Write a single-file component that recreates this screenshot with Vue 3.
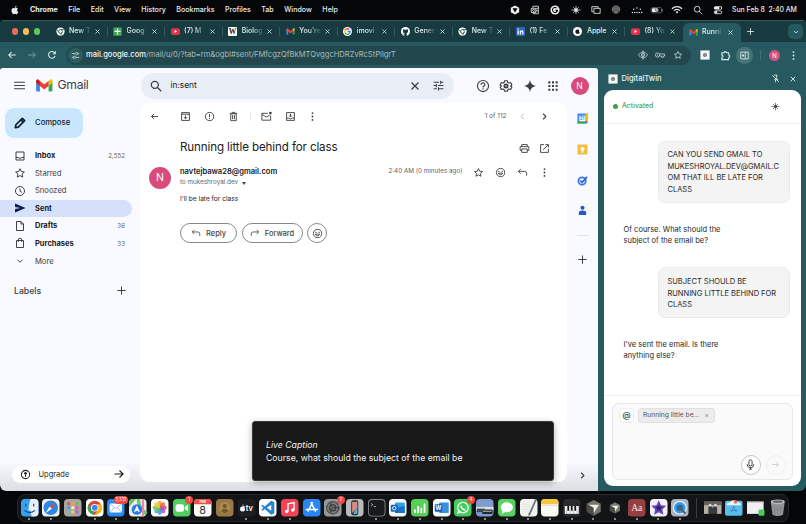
<template>
  <div class="desktop">
    <!-- macOS menu bar -->
    <div class="menubar">
      <Icon class="apple" name="apple" :size="10" />
      <span v-for="item in menus" :key="item" class="menu-item">{{ item }}</span>
      <div class="status">
        <span v-for="name in statusIcons" :key="name" class="status-cell">
          <Icon :name="name" :size="10" />
        </span>
      </div>
      <span class="clock">Sun Feb 8&nbsp; 2:40 AM</span>
    </div>

    <div class="window">
      <!-- Browser tabs -->
      <div class="tabs">
        <div class="lights">
          <i class="red"></i><i class="yellow"></i><i class="green"></i>
        </div>
        <div v-for="(tab, index) in tabs" :key="index" class="tab" :class="{ active: index === tabs.length - 1 }">
          <Icon :name="tab.icon" :size="9" />
          <span class="tab-title" :class="{ whole: tab.whole }">{{ tab.title }}</span>
          <Icon class="tab-close" name="close" :size="7" />
        </div>
        <Icon class="new-tab" name="plus" :size="9" />
        <span class="tab-search"><Icon name="down" :size="8" /></span>
      </div>

      <!-- Address bar -->
      <div class="toolbar">
        <Icon class="nav-button" name="back" :size="10" />
        <Icon class="nav-button dim" name="forward" :size="10" />
        <Icon class="nav-button" name="reload" :size="10" />
        <div class="omnibox">
          <span class="site-chip"><Icon name="site" :size="9" /></span>
          <span class="url"><b>mail.google.com</b>/mail/u/0/?tab=rm&amp;ogbl#sent/FMfcgzQfBkMTQvggcHDRZvRcStPllgrT</span>
          <Icon name="eye" :size="10" />
          <Icon name="key" :size="10" />
          <Icon name="star" :size="10" />
        </div>
        <div class="extensions">
          <Icon name="twin" :size="10" />
          <Icon name="puzzle" :size="11" />
          <span class="panel-button"><Icon name="sidepanel" :size="9" /></span>
          <i class="toolbar-line"></i>
          <span class="profile">N</span>
          <Icon name="dots" :size="11" />
        </div>
      </div>

      <div class="content">
        <div class="gmail">
          <!-- Folder list -->
          <div class="sidebar">
            <div class="brand">
              <Icon name="menu" :size="13" />
              <svg class="logo" viewBox="0 0 17 13">
                <path fill="#4285f4" d="M0 2.200h4V13H1.200Q0 13 0 11.800z" />
                <path fill="#34a853" d="M13 2.200h4v9.600Q17 13 15.800 13H13z" />
                <path fill="#fbbc04" d="M13 2l1-1Q15.400-.3 16.500.8T17 3.800L13 7.200z" />
                <path fill="#c5221f" d="M4 2L3 1Q1.600-.3.500.8T0 3.800L4 7.200z" />
                <path fill="#ea4335" d="M4 2l4.500 3.500L13 2v5.200l-4.500 3.600L4 7.200z" />
              </svg>
              <span>Gmail</span>
            </div>
            <div class="compose"><Icon name="pencil" :size="14" /><span>Compose</span></div>
            <div class="folders">
              <div v-for="folder in folders" :key="folder.name" class="folder"
                :class="{ bold: folder.bold, selected: folder.selected }">
                <Icon :name="folder.icon" :size="folder.icon === 'down' ? 10 : 12" />
                <span class="folder-name">{{ folder.name }}</span>
                <span class="count">{{ folder.count }}</span>
              </div>
            </div>
            <div class="labels"><span>Labels</span><Icon name="plus" :size="11" /></div>
            <div class="upgrade">
              <Icon name="upgrade" :size="11" />
              <span>Upgrade</span>
              <Icon name="forward" :size="12" />
            </div>
          </div>

          <div class="main">
            <div class="topbar">
              <div class="search">
                <Icon name="search" :size="14" />
                <span>in:sent</span>
                <Icon name="close" :size="12" />
                <Icon name="tune" :size="13" />
              </div>
              <div class="top-icons">
                <Icon name="help" :size="14" />
                <Icon name="gear" :size="14" />
                <Icon name="spark" :size="14" />
                <Icon name="grid" :size="14" />
                <span class="avatar small">N</span>
              </div>
            </div>

            <div class="below">
              <div class="mail">
                <div class="mail-tools">
                  <Icon class="tool-back" name="back" :size="9" />
                  <Icon class="tool-archive" name="archive" :size="11" />
                  <Icon name="spam" :size="11" />
                  <Icon name="trash" :size="11" />
                  <i class="tool-line"></i>
                  <Icon name="unread" :size="11" />
                  <Icon name="moveto" :size="11" />
                  <Icon name="dots" :size="11" />
                  <span class="position">1 of 112</span>
                  <Icon class="faded" name="left" :size="11" />
                  <Icon name="right" :size="11" />
                </div>
                <div class="subject">
                  <h2>Running little behind for class</h2>
                  <Icon name="print" :size="11" />
                  <Icon name="open" :size="11" />
                </div>
                <div class="message">
                  <span class="avatar">N</span>
                  <div class="message-body">
                    <div class="sender">
                      <b>navtejbawa28@gmail.com</b>
                      <span class="time">2:40 AM (0 minutes ago)</span>
                      <Icon name="star" :size="11" />
                      <Icon name="smile" :size="11" />
                      <Icon name="reply" :size="11" />
                      <Icon name="dots" :size="11" />
                    </div>
                    <div class="recipient">to mukeshroyal.dev <i class="caret"></i></div>
                    <p>I'll be late for class</p>
                    <div class="actions">
                      <button class="reply"><Icon name="reply" :size="10" />Reply</button>
                      <button class="fwd"><Icon name="share" :size="10" />Forward</button>
                      <button class="emoji"><Icon name="smile" :size="11" /></button>
                    </div>
                  </div>
                </div>
              </div>
              <!-- Google apps rail -->
              <div class="rail">
                <Icon name="calendar" :size="11" />
                <Icon name="keep" :size="11" />
                <Icon name="tasks" :size="11" />
                <Icon name="contact" :size="11" />
                <i class="rail-line"></i>
                <Icon name="plus" :size="11" />
                <Icon class="rail-toggle" name="right" :size="11" />
              </div>
            </div>
          </div>
        </div>

        <!-- Extension side panel -->
        <div class="panel">
          <div class="panel-title">
            <Icon name="twin" :size="10" />
            <span>DigitalTwin</span>
            <Icon name="pin" :size="9" />
            <Icon name="close" :size="8" />
          </div>
          <div class="chat">
            <div class="chat-status">
              <i></i><span>Activated</span>
              <Icon name="voice" :size="9" />
            </div>
            <div class="messages">
              <div class="bubble">CAN YOU SEND GMAIL TO<br>MUKESHROYAL.DEV@GMAIL.C<br>OM THAT ILL BE LATE FOR<br>CLASS</div>
              <div class="answer">Of course. What should the<br>subject of the email be?</div>
              <div class="bubble">SUBJECT SHOULD BE<br>RUNNING LITTLE BEHIND FOR<br>CLASS</div>
              <div class="answer">I've sent the email. Is there<br>anything else?</div>
            </div>
            <div class="composer">
              <div class="input-box">
                <div class="context">
                  <span class="at">@</span>
                  <span class="chip">Running little be... <em>×</em></span>
                </div>
                <div class="controls">
                  <span class="mic"><Icon name="mic" :size="11" /></span>
                  <span class="send"><Icon name="forward" :size="9" /></span>
                </div>
              </div>
            </div>
          </div>
        </div>
      </div>
    </div>

    <div class="caption">
      <em>Live Caption</em>
      <span>Course, what should the subject of the email be</span>
    </div>

    <!-- Dock -->
    <div class="dock-area">
      <div class="dock">
        <div v-for="(app, index) in dock" :key="index" class="app" :class="{ running: app.running }">
          <svg viewBox="0 0 20 20" v-html="app.art"></svg>
          <span v-if="app.badge" class="badge">{{ app.badge }}</span>
        </div>
        <i class="dock-line"></i>
        <div v-for="(art, index) in stacks" :key="'s' + index" class="app">
          <svg viewBox="0 0 20 20" v-html="art"></svg>
        </div>
      </div>
    </div>
  </div>
</template>

<script setup>
import { h } from 'vue';

// Helpers for the icon markup
const line = (d, width = 2) =>
  `<path d="${d}" fill="none" stroke="currentColor" stroke-width="${width}" stroke-linejoin="round"/>`;
const fill = (d, color = 'currentColor') => `<path d="${d}" fill="${color}"/>`;
const ring = 'M12 3a9 9 0 1 0 0 18 9 9 0 0 0 0-18z';
const chrome = (r) => `<circle cx="12" cy="12" r="${r}" fill="#f2f6f6"/><circle cx="12" cy="12" r="5" fill="#fff" stroke="#24474a" stroke-width="2"/>` +
  line('M12 7h9M7.700 14.500L3.500 7.500M16.300 14.500L12 22', 2).replace('currentColor', '#24474a');
const youtube = '<rect x="0" y="3" width="24" height="18" rx="5" fill="#e8304a"/>' + fill('M9.500 8l7 4-7 4z', '#fff');
const gmail = fill('M1 5h5v15H1z', '#4285f4') + fill('M18 5h5v15h-5z', '#34a853') + fill('M18 5l2-2h3v5l-5 4z', '#fbbc04') +
  fill('M1 4l3-1 8 7 6-5v7l-6 5-6-5-5-4z', '#ea4335');

const icons = {
  apple: fill('M17 12.600c0-2.500 2-3.700 2.100-3.800-1.200-1.700-3-1.900-3.600-1.900-1.500-.2-3 .9-3.700.9-.8 0-2-.9-3.200-.9C6.900 7 5.300 8 4.400 9.500c-1.800 3-.5 7.500 1.200 10 .9 1.200 1.900 2.600 3.200 2.500 1.300 0 1.800-.8 3.300-.8s2 .8 3.300.8c1.400 0 2.300-1.200 3.100-2.400 1-1.400 1.400-2.700 1.400-2.800 0 0-2.900-1-2.900-4.200zM14.600 5.300C15.300 4.500 15.700 3.300 15.600 2c-1 .1-2.300.7-3 1.500-.6.7-1.200 1.900-1 3 1.100.1 2.300-.5 3-1.200z'),
  cube: fill('M12 1l10 5.500v11L12 23 2 17.500v-11z') + fill('M6 8h12l-6 10z', '#000'),
  outlook: line('M7 7V3h13v18H8v-3M3 8h11v10H3z') + '<circle cx="8.500" cy="13" r="2.500" fill="none" stroke="currentColor" stroke-width="2"/>' + line('M14 10l6-3M14 14h6'),
  grammarly: '<circle cx="12" cy="12" r="11" fill="currentColor"/>' + line('M16 7.500a6 6 0 1 0 2 5h-5M16 12v5', 2.5).replace('currentColor', '#000'),
  voice: '<circle cx="12" cy="12" r="4" fill="currentColor"/>' + line('M1 12h22M12 2v20M5.500 5.500l13 13M18.500 5.500l-13 13', 1.8),
  windows: line('M6 16H2V4h15v4M7 8h15v12H7z'),
  airdrop: '<circle cx="12" cy="11" r="10" fill="#777"/>' + line('M6 19V11a6 6 0 0 1 12 0v8M9.500 19v-7a2.500 2.500 0 0 1 5 0v7', 1.5).replace('currentColor', '#333'),
  light: '<g fill="currentColor"><circle cx="1" cy="18" r="1.700"/><circle cx="6.500" cy="18" r="1.700"/><circle cx="12" cy="18" r="1.700"/><circle cx="17.500" cy="18" r="1.700"/><circle cx="23" cy="18" r="1.700"/><circle cx="4" cy="10" r="1.700"/><circle cx="12" cy="7" r="1.700"/><circle cx="20" cy="10" r="1.700"/></g>',
  battery: '<rect x="-2" y="6" width="25" height="13" rx="4" fill="none" stroke="#888" stroke-width="1.500"/><rect x="0" y="8" width="15" height="9" rx="2" fill="currentColor"/>' + '<path d="M12 4L7 13h4l-1 7 6-9h-4z" fill="#fff" stroke="#000" stroke-width="1"/>' + fill('M24 10h2v5h-2z', '#888'),
  wifi: line('M0 9a17 17 0 0 1 24 0M4.500 13.500a10.500 10.500 0 0 1 15 0', 3) + fill('M8.500 16.500a5 5 0 0 1 7 0L12 20.500z'),
  find: line('M10 3a7 7 0 1 0 0 14 7 7 0 0 0 0-14zM15 15l7 7'),
  control: '<rect x="2" y="3" width="20" height="8" rx="4" fill="currentColor"/><rect x="3" y="14" width="18" height="7" rx="3.500" fill="none" stroke="currentColor" stroke-width="2"/><circle cx="17" cy="7" r="2.500" fill="#000"/><circle cx="7" cy="17.500" r="3" fill="currentColor"/>',
  chrome: chrome(11),
  sheets: '<rect x="1" y="1" width="22" height="22" rx="2" fill="#43a853"/>' + fill('M10.500 4h3v6H20v3h-6.500v7h-3v-7H4v-3h6.500z', '#fff'),
  youtube,
  wiki: '<rect width="24" height="24" rx="3" fill="#fff"/><text x="12" y="19" text-anchor="middle" font-family="Liberation Serif, serif" font-size="20" font-weight="bold" fill="#222">W</text>',
  gmail,
  google: '<circle cx="12" cy="12" r="12" fill="#fff"/><g fill="none" stroke-width="3.500"><path stroke="#ea4335" d="M5.500 8.500A7.500 7.500 0 0 1 17 6.500"/><path stroke="#fbbc04" d="M5.500 8.500a7.500 7.500 0 0 0 0 7"/><path stroke="#34a853" d="M5.500 15.500a7.500 7.500 0 0 0 11 2.500"/><path stroke="#4285f4" d="M16.500 18a7.500 7.500 0 0 0 3-6H12"/></g>',
  github: '<circle cx="12" cy="12" r="12" fill="#fff"/>' + fill('M9 24v-4c-4 .5-4-2-5.500-2.500C6 16.500 6.500 19 9 18.500l.5-1.500C5 16 5 12 5.500 9.500L6 5l4 2h4l4-2 .5 4.500c1 3 0 6.500-4 7.500l1 2v5z', '#163b3f'),
  linkedin: '<rect width="24" height="24" rx="2" fill="#2d64bc"/>' + fill('M4 9h3.500v11H4zM4 4h3.500v3H4zM10 9h3v1.500c2-3 7-2 7 2.500v7h-3.500v-6c0-3-3-3-3 0v6H10z', '#fff'),
  appledot: '<circle cx="12" cy="12" r="12" fill="#fff"/>' + fill('M12 8c3-2 5 0 5 0-2 2-1 5 1 6-1 4-3 5-6 4-4 1-6-3-5.500-7C7 8 9 7 12 8zM12 7c0-2 1-3 3-3 0 2-1 3-3 3z', '#162024'),
  close: line('M5 5l14 14M19 5L5 19', 2.6),
  plus: line('M12 3v18M3 12h18', 2.2),
  down: line('M6 9l6 6 6-6', 2.4),
  left: line('M15 6l-6 6 6 6'),
  right: line('M9 6l6 6-6 6', 2.4),
  back: line('M21 12H4M11 5l-7 7 7 7', 2.500),
  forward: line('M3 12h17M13 5l7 7-7 7', 2.400),
  reload: line('M19.500 14a8 8 0 1 1-2-8l2.500 2.500M20 3v6h-6', 2.500),
  site: line('M2 7h9M18 7h4M2 17h4M13 17h9', 2.500) + '<circle cx="15" cy="7" r="3" fill="none" stroke="currentColor" stroke-width="2.500"/><circle cx="9" cy="17" r="3" fill="none" stroke="currentColor" stroke-width="2.500"/>',
  eye: line('M1 12q11-15 22 0-11 15-22 0zM12 1v22') + '<circle cx="12" cy="12" r="4" fill="none" stroke="currentColor" stroke-width="2"/>',
  key: '<circle cx="6" cy="12" r="5" fill="none" stroke="currentColor" stroke-width="2"/><circle cx="6" cy="12" r="1.500" fill="currentColor"/>' + line('M11 9.500h12v5h-3v3h-4v-3h-5'),
  star: line('M12 3.500l2.600 5.700 6.200.7-4.600 4.200 1.200 6.100L12 17.100l-5.400 3.100 1.200-6.100-4.600-4.200 6.200-.7z'),
  twin: '<rect x="1" y="1" width="22" height="22" fill="#f6f8f8"/><circle cx="12" cy="12" r="5" fill="#777"/><circle cx="12" cy="12" r="2" fill="#aaa"/>',
  puzzle: line('M4 6h5a2.500 2.500 0 0 1 5 0h5v5a2.500 2.500 0 0 1 0 5v5H4v-5a2.500 2.500 0 0 0 0-5z', 2.300),
  sidepanel: line('M2 3h20v18H2zM14 3v18M8 8v8M5 12h6', 2.200),
  dots: '<g fill="currentColor"><circle cx="12" cy="4.500" r="2"/><circle cx="12" cy="12" r="2"/><circle cx="12" cy="19.500" r="2"/></g>',
  menu: fill('M2 19h20v-2H2zm0-6h20v-2H2zm0-8v2h20V5z'),
  pencil: line('M4 20l1-5L16 4l4 4L9 19zM13.500 6.500l4 4', 3),
  inbox: line('M4 4h16v16H4zM4 15h4.500q3.500 4 7 0H20'),
  clock: line(ring + 'M12 7v5.500l4 2.500'),
  sent: fill('M2 21l21-9L2 3v7l11 2-11 2z'),
  file: line('M5 3h9l5 5v13H5zM14 3v5h5'),
  bag: line('M5 7h14v14H5zM8.500 10V6a3.500 3.500 0 0 1 7 0v4'),
  upgrade: line(ring, 2.2) + line('M9 10.500l3-3 3 3M12 8v9', 2.4),
  search: line('M10 4a6 6 0 1 0 0 12 6 6 0 0 0 0-12zM14.500 14.500L21 21', 2.200),
  tune: fill('M3 17v2h6v-2H3zM3 5v2h10V5H3zm10 16v-2h8v-2h-8v-2h-2v6h2zM7 9v2H3v2h4v2h2V9H7zm14 4v-2H11v2h10zm-6-4h2V7h4V5h-4V3h-2v6z'),
  help: line('M12 2.500a9.500 9.500 0 1 0 0 19 9.500 9.500 0 0 0 0-19zM8.700 10c0-4.500 6.600-4.300 6.600-.3 0 2.300-3.300 2.500-3.300 5') + fill('M11 16h2v2h-2z'),
  gear: line('M9.700 3h4.600l.7 2.800 2 1.100 2.800-.8 2.200 3.900-2 2 2 2-2.200 4-2.800-.9-2 1.200-.7 2.700H9.700L9 18.300l-2-1.200-2.800.9L2 14l2-2-2-2 2.200-3.900 2.800.8 2-1.100z') + '<circle cx="12" cy="12" r="2.800" fill="none" stroke="currentColor" stroke-width="3"/>',
  spark: fill('M12 1c1 7 4 10 11 11-7 1-10 4-11 11-1-7-4-10-11-11C8 11 11 8 12 1z'),
  grid: fill('M4 4h3.500v3.500H4zm6.250 0h3.500v3.500h-3.500zm6.250 0H20v3.500h-3.500zM4 10.250h3.500v3.500H4zm6.250 0h3.500v3.500h-3.500zm6.250 0H20v3.500h-3.500zM4 16.500h3.500V20H4zm6.250 0h3.500V20h-3.500zm6.250 0H20V20h-3.500z'),
  archive: line('M3.500 3.500h17v17h-17zM3.500 7h17M12 9.500v7M8.500 13.500l3.500 3.500 3.500-3.500'),
  spam: line(ring + 'M12 6.500v7') + fill('M11 15h2v2.200h-2z'),
  trash: line('M6 6h12v15H6zM4 5h16M9 3h6M10 9v9M14 9v9'),
  unread: line('M15 5H2v15h19V10M2 7l9.500 6.500L19 9') + '<circle cx="20.500" cy="4.500" r="3" fill="currentColor"/>',
  moveto: line('M3.500 3.500h17v17h-17zM3.500 15.500h5q3.500 4 7 0h5M12 6v7M9 10l3 3 3-3'),
  print: line('M6 8V3.500h12V8M6 16H2.500V8h19v8H18M6 13h12v7.500H6z'),
  open: line('M11 3.500H3.500v17h17V13M14 3.500h6.500V10M20 4L9 15'),
  smile: line(ring + 'M7 13.500q5 7 10 0z') + '<circle cx="8.500" cy="9.500" r="1.500" fill="currentColor"/><circle cx="15.500" cy="9.500" r="1.500" fill="currentColor"/>',
  reply: line('M8 4.500L3 9.500l5 5M3 9.500h13.500q4.500 0 4.500 4.500v5'),
  share: line('M16 4.500l5 5-5 5M21 9.500H7.500Q3 9.500 3 14v5'),
  calendar: fill('M1 1h22v22H1z', '#4285f4') + fill('M18 1h5v17h-5z', '#fbbc04') + fill('M1 18h17v5H1z', '#34a853') + fill('M18 18h5l-5 5z', '#ea4335') + fill('M5 6h13v12H5z', '#fff') +
    '<text x="11.500" y="16" text-anchor="middle" font-family="Roboto, sans-serif" font-size="10" font-weight="bold" fill="#4285f4">31</text>',
  keep: '<rect x="1" y="1" width="22" height="22" rx="2" fill="#f3bd42"/><circle cx="12" cy="11" r="4.500" fill="#fff"/>' + fill('M10 16h4v3h-4z', '#fff'),
  tasks: '<circle cx="11" cy="13" r="8" fill="none" stroke="#3b78e7" stroke-width="4"/>' + line('M7 12l4 4L22 4', 3.500).replace('currentColor', '#2a62d0'),
  contact: '<circle cx="12" cy="6" r="4.500" fill="#2756c5"/><path d="M4 22v-5q0-5 8-5t8 5v5z" fill="#2756c5"/>',
  pin: line('M8 3h9M15 3v8l3 4H9M12 15v7M3 3l18 18', 2.200),
  mic: '<rect x="8.500" y="2" width="7" height="13" rx="3.500" fill="none" stroke="currentColor" stroke-width="2"/>' + line('M5 11v1a7 7 0 0 0 14 0v-1M12 19v4M9 22h6'),
};

const Icon = (props) =>
  h('svg', { viewBox: '0 0 24 24', width: props.size, height: props.size, innerHTML: icons[props.name] });
Icon.props = ['name', 'size'];

const menus = ['Chrome', 'File', 'Edit', 'View', 'History', 'Bookmarks', 'Profiles', 'Tab', 'Window', 'Help'];
const statusIcons = ['cube', 'outlook', 'grammarly', 'voice', 'windows', 'airdrop', 'light', 'battery', 'wifi', 'find', 'control'];

const tabs = [
  { icon: 'chrome', title: 'New T' },
  { icon: 'sheets', title: 'Goog' },
  { icon: 'youtube', title: '(7) M' },
  { icon: 'wiki', title: 'Biolog' },
  { icon: 'gmail', title: "You're" },
  { icon: 'google', title: 'imovi' },
  { icon: 'github', title: 'Gener' },
  { icon: 'chrome', title: 'New T' },
  { icon: 'linkedin', title: '(1) Fe' },
  { icon: 'appledot', title: 'Apple', whole: true },
  { icon: 'youtube', title: '(8) Yo' },
  { icon: 'gmail', title: 'Runni' },
];

const folders = [
  { icon: 'inbox', name: 'Inbox', count: '2,552', bold: true },
  { icon: 'star', name: 'Starred' },
  { icon: 'clock', name: 'Snoozed' },
  { icon: 'sent', name: 'Sent', bold: true, selected: true },
  { icon: 'file', name: 'Drafts', count: '36', bold: true },
  { icon: 'bag', name: 'Purchases', count: '33', bold: true },
  { icon: 'down', name: 'More' },
];

// Dock artwork, drawn on a 20x20 tile
const tile = (color, inner = '') => `<rect width="20" height="20" rx="4.500" fill="${color}"/>${inner}`;
const path = (d, color) => `<path d="${d}" fill="${color}"/>`;
const stroke = (d, color, width = 1.5) => `<path d="${d}" fill="none" stroke="${color}" stroke-width="${width}"/>`;
const dot = (x, y, r, color) => `<circle cx="${x}" cy="${y}" r="${r}" fill="${color}"/>`;
const petals = ['#f5a623', '#f06a3c', '#e0457b', '#9b59c6', '#4a90e2', '#3fb8a5', '#7cc247', '#d9d53b']
  .map((color, i) => `<ellipse cx="10" cy="5.800" rx="2.500" ry="3.800" fill="${color}" opacity=".85" transform="rotate(${i * 45} 10 10)"/>`).join('');
const launchpad = ['#e8554a', '#f2a13c', '#69c05b', '#4a9be8', '#eee', '#e85a9a', '#5ac8c0', '#f2cf3c', '#9c6be0']
  .map((color, i) => `<rect x="${3.5 + (i % 3) * 4.8}" y="${3.5 + Math.floor(i / 3) * 4.8}" width="3.500" height="3.500" rx="1" fill="${color}"/>`).join('');
const cursorCube = path('M10 1l8 4.500v9L10 19l-8-4.500v-9z', '#77736d') + path('M2 5.500L10 10v9l-8-4.500z', '#4c4a47') + path('M4 6.500h12L10 16v-6z', '#f0efed');

const dock = [
  { art: tile('#39a0f0', path('M11 0h4.500Q20 0 20 4.500v11Q20 20 15.500 20H12q-1-4-1-7H8.500Q9 5 11 0z', '#e6eff8') + stroke('M4 13q6 5 12 0M5.500 5.500v3M14.500 5.500v3', '#173a5c', 1.2)), running: true },
  { art: tile('#eef1f4', dot(10, 10, 8.3, '#2d87e2') + path('M16 4l-4.700 7.200-2.600-2.500z', '#ee4438') + path('M4 16l4.700-7.300 2.600 2.500z', '#fff')), running: true },
  { art: tile('#aaa5a2', launchpad) },
  { art: tile('#fff', dot(10, 10, 8, '#e34335') + path('M3 6l5 8 2 4A8 8 0 0 1 3 6z', '#35a853') + path('M10 18l4-6h0l-1-6h4a8 8 0 0 1-7 12z', '#fbbd08') + dot(10, 10, 4.300, '#fff') + dot(10, 10, 3.300, '#4285f4')), running: true },
  { art: tile('#2c8bf0', '<rect x="3" y="5" width="14" height="10.500" rx="1.500" fill="#fff"/>' + stroke('M3.500 5.500L10 11l6.500-5.500M3.500 15l4.500-5M16.500 15L12 10', '#8ab8e8', 1)), badge: '3,512', running: true },
  { art: tile('#eceee9', path('M0 5q0-5 5-5h3l-8 9z', '#63c46e') + stroke('M11 0q-1 10 9 17', '#6fc276', 4) + stroke('M16 0v20', '#e887a7', 2.500) + dot(9, 12, 6, '#2e7ce8') + path('M9 7.500l3.500 7.500L9 13.300 5.500 15z', '#fff')), running: true },
  { art: tile('#fafafa', petals) },
  { art: tile('#50cf60', '<rect x="3" y="6" width="9.500" height="8.500" rx="2.200" fill="#fff"/>' + path('M13.500 9l3.500-2.500v7.500l-3.500-2.500z', '#fff')), badge: '1' },
  { art: tile('#fafafa', path('M0 6V4.500Q0 0 4.500 0h11Q20 0 20 4.500V6z', '#ec5148') + '<text x="10" y="4.800" text-anchor="middle" font-family="Inter, sans-serif" font-size="4" font-weight="bold" fill="#fff">FEB</text><text x="10" y="17.500" text-anchor="middle" font-family="Inter, sans-serif" font-size="12.500" fill="#333">8</text>') },
  { art: tile('#9a7845', dot(10, 10, 6.500, '#aa894f') + dot(10, 8, 2.300, '#71562e') + path('M5.500 14q4.500-5.500 9 0-4.500 4-9 0z', '#71562e')) },
  { art: tile('#1d1e1f', path('M5 8.500q1.500-1 3 .2-1 1.800.2 3.200-1 3-3 2.100-2.800.9-2.900-2.500Q2.500 8 5 8.500zM5 7.800Q5 6.200 6.600 6q0 1.600-1.600 1.800z', '#fff') + '<text x="8.800" y="14" font-family="Inter, sans-serif" font-size="8.500" font-weight="600" fill="#fff">tv</text>'), running: true },
  { art: tile('#fafcff', path('M14 2l3.500 1.600v12.800L14 18 6.500 11.500 4 13.500l-1.500-1L5 10 2.500 7.500 4 6.500l2.500 2zM14 6.500L9 10l5 3.500z', '#2684cf')), running: true },
  { art: tile('#f44358', stroke('M8 14V5.500l7-1.500v8.500', '#fff', 1.500) + dot(6.500, 14.200, 2, '#fff') + dot(13.500, 12.700, 2, '#fff')), running: true },
  { art: tile('#2a86f2', stroke('M11 3.500L5.500 14.500M9 3.500l5.500 11M3 12h14', '#fff', 1.700)) },
  { art: tile('#97999b', '<circle cx="10" cy="10" r="7" fill="#77797b" stroke="#333" stroke-width="1.500" stroke-dasharray="1 .5"/><circle cx="10" cy="10" r="3.500" fill="none" stroke="#333" stroke-width="1.200"/>' + stroke('M10 10h7M10 10L6.500 4M10 10l-3.500 6', '#333', 1)), badge: '2' },
  { art: tile('#b9bbbd', '<rect x="6" y="1.500" width="8" height="17" rx="2" fill="#1d2c3d"/>' + path('M7 3h6v7l-6 6z', '#df8a78') + path('M13 8v9H8z', '#58b1c9')) },
  { art: tile('#888', '<rect x="1" y="1" width="18" height="18" rx="4" fill="#181a1b"/>' + stroke('M3.500 5l2 1.500-2 1.500M6.500 8.500H9', '#ddd', .8)), running: true },
  { art: tile('#f5f8fb', '<rect x="7" y="4" width="11" height="12" rx="1" fill="#31a2e8"/>' + path('M7 10l11-2v8H7z', '#1873c8') + '<rect x="2" y="6.500" width="8" height="8" rx="1" fill="#1267b8"/><circle cx="6" cy="10.500" r="2" fill="none" stroke="#fff"/>'), running: true },
  { art: tile('#57cf59', stroke('M4.500 16v-4M8.200 16V8M11.800 16v-6M15.500 16V5', '#fff', 2)), running: true },
  { art: tile('#f8fafc', '<rect x="7" y="4" width="11" height="12" rx="1" fill="#3a8fdd"/><rect x="2" y="6" width="8.500" height="8.500" rx="1" fill="#1b59ae"/><text x="6.200" y="12.600" text-anchor="middle" font-family="Inter, sans-serif" font-size="6.500" font-weight="bold" fill="#fff">W</text>'), running: true },
  { art: tile('#42cd5d', '<circle cx="10.200" cy="9.800" r="6" fill="none" stroke="#fff" stroke-width="1.500"/>' + path('M3.500 17l1.500-5 3 3.500z', '#fff') + stroke('M7.800 7.500q.5 4 5 5', '#fff', 1.800)), badge: '4', running: true },
  { art: tile('#7e9bcf', path('M0 9h20v4H0z', '#d9dfe6') + '<rect x="7" y="12" width="12" height="5" rx="1" fill="#23292e"/><rect x="1" y="11" width="9" height="4" fill="#3c4650"/>' + stroke('M8 14h10', '#ccc', 1)), running: true },
  { art: tile('#58d263', '<ellipse cx="10" cy="9.500" rx="7" ry="5.700" fill="#fff"/>' + path('M5 13l-1 4 4-2z', '#fff')), running: true },
  { art: tile('#f1f1ef', stroke('M3 6h9M3 9h8M3 12h7', '#ddd', .7) + stroke('M18.500 0L11 17', '#667684', 2) + path('M10 16l2 1-2.300 2.500z', '#333')), running: true },
  { art: tile('#faf9f3', path('M0 6V4.500Q0 0 4.500 0h11Q20 0 20 4.500V6z', '#f5c63e') + stroke('M0 7.500h20', '#c9c6b9', .6)), running: true },
  { art: tile('#292b2c', '<rect x="2" y="8" width="16" height="9" fill="#f1f1f1"/>' + stroke('M6 8v5.500M10 8v5.500M14 8v5.500', '#111', 2) + stroke('M4 13v4M8 13v4M12 13v4M16 13v4', '#888', .5)), running: true },
  { art: cursorCube, running: true },
  { art: `<g transform="translate(3 3) scale(.72)">${cursorCube}</g>`, running: true },
  { art: tile('#963f42', path('M0 14h5l-5 6z', '#963f42') + '<text x="10" y="14" text-anchor="middle" font-family="Liberation Serif, serif" font-size="11" fill="#f4e5e4">Aa</text>'), running: true },
  { art: tile('#f3eff9', path('M10 1.500l2.600 5.600 6 .7-4.500 4.200 1.200 6.100-5.300-3-5.300 3 1.200-6.100L1.400 7.800l6-.7z', '#6544bd') + path('M10 6l1.200 2.700 2.900.3-2.200 2 .6 2.900-2.500-1.500-2.500 1.500.6-2.900-2.200-2 2.900-.3z', '#332163')), running: true },
  { art: tile('#a9b4c2', dot(10, 10, 8, '#e2ecf5') + '<circle cx="10" cy="10" r="5" fill="#35658b" stroke="#3598ea" stroke-width="3"/>' + stroke('M11 11l5.500 5.500', '#57606a', 2.500)), running: true },
];

const stacks = [
  '<rect x="0" y="3" width="20" height="14" fill="#b5b0a7"/><rect x="0" y="3" width="20" height="4" fill="#64625f"/>' + path('M5 17V9l2-2 3 3 3-3 2 3v7z', '#393a3b') + dot(7, 7, 1.500, '#ddd') + dot(13, 7, 1.500, '#ddd'),
  '<rect x="0" y="2" width="20" height="17" rx="2" fill="#58bcec"/>' + path('M5 4q5-5 10 0l3 1v2H2V5z', '#eef3f5') + dot(12, 3.500, 2, '#ed695d') + stroke('M10.500 8L7 15M9.500 8l3.500 7M6 13h8', '#3488bc', .9),
  '<rect x="0" y="3" width="19" height="14" fill="#efefef"/><rect x="0" y="3" width="19" height="1.500" fill="#ccc"/><rect x="13" y="12" width="7" height="7" rx="1.500" fill="#4dca5f"/>',
  path('M2 3h16l-2 15q-6 3-12 0z', '#929697') + '<ellipse cx="10" cy="3" rx="8" ry="2.500" fill="#cacdcd"/><ellipse cx="10" cy="3" rx="6" ry="1.500" fill="#696d6e"/>' + stroke('M6 7l1 11M10 7v11M14 7l-1 11M4 9l12 6M16 9L4 15', '#777b7c', .7),
];
</script>

<style>
body {
  background: #050607;
}
</style>

<style scoped>
.desktop {
  width: 806px;
  height: 524px;
  display: flex;
  flex-direction: column;
  position: relative;
  overflow: hidden;
  background: #050607;
  font-family: Inter, sans-serif;
  font-size: 7.5px;
  line-height: 1.2;
}

svg {
  flex: none;
  display: block;
  overflow: visible;
}

/* Menu bar */
.menubar {
  height: 20px;
  padding: 0 8px 0 10px;
  display: flex;
  align-items: center;
  color: #ececec;
  font-weight: 500;
  font-size: 7.1px;
}

.apple {
  margin-right: 10px;
}

.menu-item {
  margin-right: 10.5px;
}

.menu-item:nth-of-type(1) {
  font-weight: 700;
  font-size: 7.2px;
}

.status {
  margin-left: auto;
  display: flex;
}

.status-cell {
  width: 20.3px;
  display: flex;
  justify-content: center;
}

.clock {
  width: 66px;
  margin-left: 4px;
  white-space: nowrap;
  font-size: 6.9px;
}

/* Browser window */
.window {
  height: 471px;
  border-radius: 4px 4px 6px 6px;
  overflow: hidden;
  background: #265a60;
}

.tabs {
  height: 22px;
  display: flex;
  align-items: center;
  background: #173b40;
  border-top: 1px solid #3b585b;
  box-sizing: border-box;
  color: #e3eeee;
}

.lights {
  width: 50px;
  padding-left: 11.5px;
  box-sizing: border-box;
  display: flex;
  gap: 4.5px;
}

.lights i {
  width: 6.5px;
  height: 6.5px;
  border-radius: 50%;
}

.lights .red {
  background: #ed6a5e;
}

.lights .yellow {
  background: #f4bf4f;
}

.lights .green {
  background: #61c554;
}

.tab {
  width: 57.55px;
  height: 19px;
  padding: 0 7px 0 5.5px;
  box-sizing: border-box;
  display: flex;
  align-items: center;
  background: linear-gradient(#34585b, #34585b) right center / 1px 9px no-repeat;
}

.tab:nth-last-child(4) {
  background: none;
}

.tab.active {
  align-self: flex-end;
  background: #265a60;
  border-radius: 6px 6px 0 0;
}

.tab-title {
  width: 23px;
  margin-left: 4.5px;
  white-space: nowrap;
  font-size: 7px;
  font-weight: 500;
  -webkit-mask-image: linear-gradient(to right, #000 45%, transparent 98%);
  mask-image: linear-gradient(to right, #000 45%, transparent 98%);
}

.tab-title.whole {
  -webkit-mask-image: none;
  mask-image: none;
}

.tab-close {
  margin-left: auto;
}

.new-tab {
  margin-left: 5px;
}

.tab-search {
  width: 15px;
  height: 15px;
  margin-left: auto;
  margin-right: 3px;
  border-radius: 5px;
  display: flex;
  align-items: center;
  justify-content: center;
  background: #265a60;
}

.toolbar {
  height: 26px;
  padding: 0 7px;
  box-sizing: border-box;
  display: flex;
  align-items: center;
  color: #e0ecec;
}

.nav-button {
  margin-right: 10px;
}

.nav-button.dim {
  opacity: 0.45;
}

.omnibox {
  width: 625px;
  height: 19px;
  margin-left: -1px;
  padding: 0 8.5px 0 1.5px;
  border-radius: 10px;
  box-sizing: border-box;
  display: flex;
  align-items: center;
  gap: 7.5px;
  background: #22484d;
  color: #bfd0d0;
}

.site-chip {
  width: 15px;
  height: 15px;
  margin-right: -4px;
  border-radius: 50%;
  display: flex;
  align-items: center;
  justify-content: center;
  background: #2d5b60;
}

.url {
  flex: 1;
  white-space: nowrap;
  font-size: 7.58px;
  color: #a5bbbd;
}

.url b {
  font-weight: 500;
  color: #f0f6f6;
}

.extensions {
  margin-left: 9px;
  display: flex;
  align-items: center;
  flex: 1;
}

.panel-button {
  width: 17px;
  height: 17px;
  margin-left: 5.5px;
  border-radius: 50%;
  display: flex;
  align-items: center;
  justify-content: center;
  background: #467478;
}

.extensions svg:nth-child(2) {
  margin-left: 9.5px;
}

.toolbar-line {
  width: 1px;
  height: 10px;
  margin-left: 7px;
  background: #3f7074;
}

.profile {
  width: 11px;
  height: 11px;
  margin: 0 auto 0 8px;
  border-radius: 50%;
  text-align: center;
  line-height: 11px;
  font-size: 6px;
  color: #fff;
  background: #d84e7e;
}

.content {
  height: 423px;
  display: flex;
}

/* Gmail */
.gmail {
  width: 598px;
  display: flex;
  border-radius: 3px 3px 0 6px;
  overflow: hidden;
  background: linear-gradient(#f8faff 93%, #dcdee3);
  color: #3c4043;
}

.sidebar {
  width: 139.5px;
  display: flex;
  flex-direction: column;
}

.brand {
  height: 35px;
  padding: 0 0 0 13px;
  display: flex;
  align-items: center;
  font-size: 12.2px;
  letter-spacing: -0.3px;
}

.logo {
  width: 16.5px;
  height: 12.5px;
  margin: 0 5.5px 0 9.5px;
}

.compose {
  width: 78px;
  height: 30.5px;
  margin: 4.5px 0 0 4.5px;
  padding-left: 8px;
  box-sizing: border-box;
  border-radius: 9px;
  display: flex;
  align-items: center;
  gap: 8.5px;
  background: #c8e7fd;
  color: #11242f;
  font-size: 7.7px;
  font-weight: 500;
}

.folders {
  margin-top: 8.8px;
}

.folder {
  height: 17.58px;
  width: 131.5px;
  padding: 0 6.5px 0 13.5px;
  box-sizing: border-box;
  display: flex;
  align-items: center;
  font-size: 7.6px;
}

.folder svg {
  width: 12px;
}

.folder-name {
  margin-left: 9.5px;
}

.folder.bold .folder-name {
  font-weight: 700;
  font-size: 7.5px;
  color: #202124;
}

.folder.selected {
  border-radius: 0 9px 9px 0;
  background: #d5e1fb;
  color: #0b1d49;
}

.count {
  margin-left: auto;
  font-size: 6.2px;
  color: #5f6368;
}

.labels {
  margin-top: 14px;
  padding: 0 12.5px 0 14px;
  height: 14px;
  display: flex;
  align-items: center;
  justify-content: space-between;
  font-size: 8.7px;
  font-weight: 500;
}

.upgrade {
  width: 118px;
  height: 17px;
  margin: auto 0 8.5px 12px;
  padding: 0 5px 0 7.5px;
  border-radius: 9px;
  box-sizing: border-box;
  display: flex;
  align-items: center;
  background: #fff;
  color: #222;
  font-size: 7.5px;
}

.upgrade span {
  flex: 1;
  margin-left: 8px;
}

.main {
  flex: 1;
  display: flex;
  flex-direction: column;
}

.topbar {
  height: 35px;
  display: flex;
  align-items: center;
}

.search {
  width: 313px;
  height: 26px;
  margin-left: 1px;
  padding: 0 8.5px;
  box-sizing: border-box;
  border-radius: 13px;
  display: flex;
  align-items: center;
  background: #e9eef6;
  font-size: 8.3px;
}

.search span {
  flex: 1;
  margin-left: 7.5px;
  color: #202124;
}

.search svg:last-child {
  margin-left: 11.5px;
}

.top-icons {
  margin-left: 22.5px;
  display: flex;
  align-items: center;
  gap: 9.4px;
}

.avatar {
  width: 22px;
  height: 22px;
  flex: none;
  border-radius: 50%;
  text-align: center;
  line-height: 22px;
  font-size: 10.5px;
  color: #fff;
  background: #d84b7b;
}

.avatar.small {
  width: 18px;
  height: 18px;
  margin-left: 1px;
  line-height: 18px;
  font-size: 8.5px;
}

.below {
  flex: 1;
  display: flex;
  padding-bottom: 9px;
}

.mail {
  width: 427.5px;
  border-radius: 9px;
  background: #fff;
}

.mail-tools {
  height: 27px;
  padding: 0 17.5px 0 10px;
  display: flex;
  align-items: center;
}

.mail-tools svg {
  margin-right: 13.2px;
}

.mail-tools svg:last-child {
  margin-right: 0;
}

.mail-tools .tool-archive {
  margin-left: 8px;
}

.tool-line {
  width: 1px;
  height: 9px;
  margin: 0 10.5px 0 -2.5px;
  background: #e6e6e6;
}

.mail-tools svg:nth-of-type(6) {
  margin-right: 11px;
}

.position {
  margin: 0 10.5px 0 auto;
  font-size: 6.5px;
  color: #5f6368;
}

.mail-tools .faded {
  margin-right: 10.5px;
  opacity: 0.4;
}

.subject {
  height: 36.5px;
  padding: 0 17.5px 0 40.5px;
  display: flex;
  align-items: center;
  gap: 9px;
}

.subject h2 {
  flex: 1;
  margin: 0;
  font-size: 11.6px;
  font-weight: 400;
  letter-spacing: -0.12px;
  color: #202124;
}

.message {
  display: flex;
  padding-left: 9.5px;
}

.message .avatar {
  margin-right: 9px;
}

.message-body {
  flex: 1;
}

.sender {
  height: 11px;
  padding-right: 17.5px;
  display: flex;
  align-items: center;
  gap: 10.9px;
}

.sender b {
  flex: 1;
  font-size: 7.55px;
  font-weight: 600;
  color: #202124;
}

.time {
  margin-right: -0.5px;
  font-size: 6.3px;
  color: #5f6368;
}

.recipient {
  height: 11px;
  display: flex;
  align-items: center;
  gap: 3.5px;
  font-size: 6.3px;
  color: #5f6368;
}

.caret {
  border: 2.5px solid transparent;
  border-top: 3px solid #444;
  border-bottom: 0;
}

.message p {
  margin: 5px 0 19.5px;
  line-height: 10px;
  font-size: 6.6px;
  color: #202124;
}

.actions {
  display: flex;
  gap: 4.5px;
}

.actions button {
  height: 20px;
  padding: 0;
  border: 1px solid #85888b;
  border-radius: 10px;
  box-sizing: border-box;
  display: flex;
  align-items: center;
  justify-content: center;
  gap: 5px;
  background: #fff;
  color: #444746;
  font-family: inherit;
  font-size: 7.5px;
  font-weight: 500;
}

.actions .reply {
  width: 57px;
}

.actions .fwd {
  width: 61px;
}

.actions .emoji {
  width: 20px;
}

.rail {
  flex: 1;
  padding-top: 10.4px;
  display: flex;
  flex-direction: column;
  align-items: center;
}

.rail svg {
  margin-bottom: 19.6px;
}

.rail-line {
  width: 12px;
  height: 1px;
  margin: -1px 0 18px;
  background: #dfe2e8;
}

.rail .rail-toggle {
  margin: auto 0 1px;
}

/* Side panel */
.panel {
  flex: 1;
  margin-left: 1px;
  padding: 0 5px 5.5px 4.5px;
  display: flex;
  flex-direction: column;
}

.panel-title {
  height: 22px;
  padding: 0 4px 1px 4px;
  box-sizing: border-box;
  display: flex;
  align-items: center;
  gap: 9px;
  color: #e8f1f1;
  font-size: 7.6px;
  font-weight: 500;
}

.panel-title span {
  flex: 1;
  margin-left: -5px;
}

.chat {
  flex: 1;
  display: flex;
  flex-direction: column;
  border-radius: 9px;
  background: #fff;
}

.chat-status {
  height: 33.5px;
  padding: 0 21px 0 9px;
  box-sizing: border-box;
  border-bottom: 1px solid #f1f1f1;
  display: flex;
  align-items: center;
  color: #4aa351;
  font-size: 6.9px;
  font-weight: 500;
}

.chat-status i {
  width: 5.5px;
  height: 5.5px;
  margin-right: 4px;
  border-radius: 50%;
  background: #439c4a;
}

.chat-status svg {
  margin-left: auto;
  color: #4b4b4b;
}

.messages {
  flex: 1;
  padding: 17px 11px 0 20px;
  line-height: 11.5px;
  font-size: 7.5px;
  color: #262626;
}

.bubble {
  width: 132.5px;
  margin-left: auto;
  padding: 7.8px 9px 6.6px;
  box-sizing: border-box;
  border: 1px solid #ececec;
  border-radius: 7px;
  white-space: nowrap;
  letter-spacing: -0.02px;
  background: #f4f4f4;
}

.answer {
  margin: 20.7px 0;
}

.composer {
  height: 91px;
  padding: 7px 8.5px 6px 8.5px;
  box-sizing: border-box;
  border-top: 1px solid #f0f0f0;
}

.input-box {
  height: 77px;
  padding: 4.5px 6px 4px;
  box-sizing: border-box;
  border: 1px solid #e7e7e7;
  border-radius: 7px;
  display: flex;
  flex-direction: column;
  justify-content: space-between;
  background: #fafafa;
}

.context,
.controls {
  display: flex;
  align-items: center;
  gap: 4px;
}

.at {
  width: 15px;
  height: 15px;
  box-sizing: border-box;
  border: 1px solid #ededed;
  border-radius: 4px;
  text-align: center;
  line-height: 12px;
  font-size: 8.5px;
  background: #fff;
  color: #222;
}

.chip {
  width: 77px;
  height: 14.5px;
  padding: 0 5px 0 4px;
  box-sizing: border-box;
  border: 1px solid #e0e0e0;
  border-radius: 3px;
  display: flex;
  align-items: center;
  justify-content: space-between;
  white-space: nowrap;
  background: #ececec;
  color: #555;
  font-size: 6.7px;
}

.chip em {
  font-style: normal;
  color: #888;
}

.controls {
  justify-content: flex-end;
  gap: 5px;
}

.mic,
.send {
  width: 20px;
  height: 20px;
  box-sizing: border-box;
  border: 1px solid #c6c6c6;
  border-radius: 50%;
  display: flex;
  align-items: center;
  justify-content: center;
  background: #fff;
  color: #333;
}

.send {
  border-color: #efefef;
  background: #fafafa;
  color: #ccc;
}

/* Live caption floats over the browser */
.caption {
  position: absolute;
  left: 252px;
  top: 421px;
  width: 302px;
  height: 60px;
  padding: 16.5px 13px 0;
  box-sizing: border-box;
  border: 1px solid #3a3a3a;
  border-radius: 3px;
  display: flex;
  flex-direction: column;
  line-height: 13px;
  font-size: 8.73px;
  color: #f1f1f1;
  background: #181818;
  box-shadow: 0 2px 7px rgba(0, 0, 0, 0.3);
}

/* Dock */
.dock-area {
  flex: 1;
  padding: 3px 17px 2px;
}

.dock {
  width: 772px;
  height: 28px;
  padding-left: 0.6px;
  box-sizing: border-box;
  border: 1px solid #25282a;
  border-radius: 8px;
  display: flex;
  background: #121415;
}

.app {
  width: 21.7px;
  position: relative;
  display: flex;
  justify-content: center;
  padding-top: 3.5px;
}

.app svg {
  width: 17.5px;
  height: 17.5px;
}

.app.running::after {
  content: '';
  position: absolute;
  bottom: 1px;
  width: 2px;
  height: 2px;
  border-radius: 50%;
  background: #b5b5b5;
}

.badge {
  position: absolute;
  top: 1px;
  right: -1px;
  min-width: 8px;
  height: 8px;
  padding: 0 1.5px;
  box-sizing: border-box;
  border-radius: 4px;
  text-align: center;
  line-height: 8px;
  font-size: 4.5px;
  color: #fff;
  background: #ea4c43;
}

.dock-line {
  width: 1px;
  height: 20px;
  margin: 3px 4.5px 0 5px;
  background: #3a3d3f;
}
</style>
